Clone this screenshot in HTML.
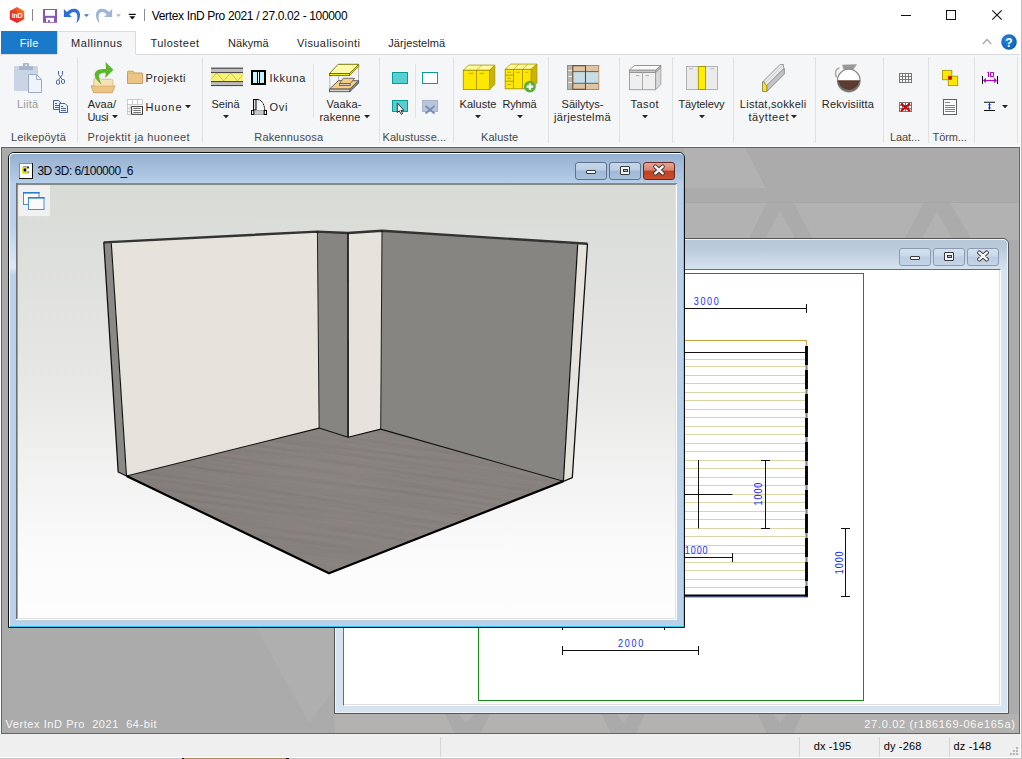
<!DOCTYPE html>
<html><head><meta charset="utf-8">
<style>
*{margin:0;padding:0;box-sizing:border-box}
html,body{width:1022px;height:759px;overflow:hidden;background:#fff;font-family:"Liberation Sans", sans-serif;color:#000;position:relative}
.a{position:absolute}
.t{position:absolute;white-space:pre}
svg{position:absolute;overflow:visible}
</style></head><body>
<div class="a" style="left:0;top:0;width:1022px;height:31px;background:#fff"></div><div class="a" style="left:1021px;top:0;width:1px;height:759px;background:#bdbdbd"></div><svg style="left:8px;top:6px" width="18" height="18" viewBox="0 0 18 18">
<defs><linearGradient id="gInd" x1="0.1" y1="0.9" x2="0.9" y2="0.1"><stop offset="0" stop-color="#e81c22"/><stop offset="0.5" stop-color="#ec3a24"/><stop offset="1" stop-color="#f2852e"/></linearGradient></defs>
<polygon points="9,1 16.2,5 16.2,13.2 9,17 1.8,13.2 1.8,5" fill="url(#gInd)"/>
<text x="9" y="12" font-size="7" font-weight="bold" fill="#fff" text-anchor="middle" font-family="Liberation Sans" letter-spacing="-0.3">InD</text>
</svg><div class="a" style="left:32px;top:9px;width:1px;height:12px;background:#8a8a8a"></div><svg style="left:43px;top:9px" width="14" height="14" viewBox="0 0 14 14">
<rect x="0" y="0" width="14" height="13.8" fill="#8a55b5"/>
<rect x="2" y="1" width="10" height="5.8" fill="#fff"/>
<rect x="3" y="8.8" width="8" height="4.2" fill="#fff"/>
<rect x="5" y="11.2" width="2" height="1.8" fill="#8a55b5"/>
</svg><svg style="left:0;top:0" width="150" height="30" viewBox="0 0 150 30">
<g fill="#2f6fd6">
<polygon points="63.9,9 63.9,17 71.8,17"/>
<path d="M66.5,12.5 C70,7.5 79.5,7 80,14.5 C80.2,18.5 78.5,21.5 76.3,23.3 C77.3,20.5 77.6,17.5 77.2,15 C76.5,11.3 72,10.5 69.3,14.8 Z"/>
</g>
<g fill="#9fb5d5" transform="translate(176,0) scale(-1,1)">
<polygon points="63.9,9 63.9,17 71.8,17"/>
<path d="M66.5,12.5 C70,7.5 79.5,7 80,14.5 C80.2,18.5 78.5,21.5 76.3,23.3 C77.3,20.5 77.6,17.5 77.2,15 C76.5,11.3 72,10.5 69.3,14.8 Z"/>
</g>
<polygon points="84,14.2 89,14.2 86.5,17" fill="#4a70b0"/>
<polygon points="116,14.2 121,14.2 118.5,17" fill="#b8b8b8"/>
</svg><svg style="left:0;top:0" width="150" height="30" viewBox="0 0 150 30">
<rect x="128.8" y="13.8" width="7" height="1.2" fill="#111"/><polygon points="129.3,16.3 135.3,16.3 132.3,19.6" fill="#111"/></svg><div class="a" style="left:144px;top:9px;width:1px;height:12px;background:#8a8a8a"></div><div class="a" style="left:901px;top:15px;width:10px;height:1px;background:#111"></div><div class="a" style="left:946px;top:10px;width:10px;height:10px;border:1px solid #111"></div><svg style="left:992px;top:10px" width="10" height="10" viewBox="0 0 10 10"><path d="M0.3,0.3 L9.7,9.7 M9.7,0.3 L0.3,9.7" stroke="#111" stroke-width="1.1"/></svg><div class="a" style="left:1px;top:31px;width:56px;height:23px;background:#1a79c9"></div><div class="a" style="left:57px;top:31px;width:79px;height:24px;background:#f5f6f7;border:1px solid #dadbdc;border-bottom:none"></div><svg style="left:982px;top:38px" width="10" height="7" viewBox="0 0 10 7"><path d="M0.8,6 L5,1.5 L9.2,6" fill="none" stroke="#a8a8a8" stroke-width="1.3"/></svg><svg style="left:1001px;top:34px" width="16" height="16" viewBox="0 0 16 16">
<defs><radialGradient id="gHelp" cx="0.4" cy="0.35" r="0.7"><stop offset="0" stop-color="#2a86dc"/><stop offset="1" stop-color="#0b5cb3"/></radialGradient></defs>
<circle cx="8" cy="8" r="7.8" fill="url(#gHelp)"/>
<text x="8" y="12.6" font-size="12" font-weight="bold" fill="#fff" text-anchor="middle" font-family="Liberation Sans">?</text></svg><div class="a" style="left:0;top:54px;width:1020px;height:1px;background:#dadbdc"></div><div class="a" style="left:57px;top:54px;width:79px;height:1px;background:#f5f6f7"></div><div class="a" style="left:0;top:55px;width:1020px;height:90px;background:#f5f6f7"></div><div class="a" style="left:0;top:145px;width:1020px;height:2px;background:#f9fafb"></div><div class="a" style="left:77px;top:57px;width:1px;height:86px;background:#e0e1e3"></div><div class="a" style="left:202px;top:57px;width:1px;height:86px;background:#e0e1e3"></div><div class="a" style="left:379px;top:57px;width:1px;height:86px;background:#e0e1e3"></div><div class="a" style="left:453px;top:57px;width:1px;height:86px;background:#e0e1e3"></div><div class="a" style="left:548px;top:57px;width:1px;height:86px;background:#e0e1e3"></div><div class="a" style="left:619px;top:57px;width:1px;height:86px;background:#e0e1e3"></div><div class="a" style="left:672px;top:57px;width:1px;height:86px;background:#e0e1e3"></div><div class="a" style="left:733px;top:57px;width:1px;height:86px;background:#e0e1e3"></div><div class="a" style="left:815px;top:57px;width:1px;height:86px;background:#e0e1e3"></div><div class="a" style="left:883px;top:57px;width:1px;height:86px;background:#e0e1e3"></div><div class="a" style="left:928px;top:57px;width:1px;height:86px;background:#e0e1e3"></div><div class="a" style="left:974px;top:57px;width:1px;height:86px;background:#e0e1e3"></div><div class="a" style="left:1017px;top:57px;width:1px;height:86px;background:#e0e1e3"></div><div class="a" style="left:313px;top:64px;width:1px;height:54px;background:#e1e2e4"></div><div class="a" style="left:415px;top:64px;width:1px;height:54px;background:#e1e2e4"></div><svg style="left:112px;top:114.5px" width="6" height="4" viewBox="0 0 6 4"><polygon points="0,0 6,0 3,3.2" fill="#222"/></svg><svg style="left:185px;top:104.5px" width="6" height="4" viewBox="0 0 6 4"><polygon points="0,0 6,0 3,3.2" fill="#222"/></svg><svg style="left:223px;top:114.5px" width="6" height="4" viewBox="0 0 6 4"><polygon points="0,0 6,0 3,3.2" fill="#222"/></svg><svg style="left:364px;top:114.5px" width="6" height="4" viewBox="0 0 6 4"><polygon points="0,0 6,0 3,3.2" fill="#222"/></svg><svg style="left:475px;top:114.5px" width="6" height="4" viewBox="0 0 6 4"><polygon points="0,0 6,0 3,3.2" fill="#222"/></svg><svg style="left:517px;top:114.5px" width="6" height="4" viewBox="0 0 6 4"><polygon points="0,0 6,0 3,3.2" fill="#222"/></svg><svg style="left:642px;top:114.5px" width="6" height="4" viewBox="0 0 6 4"><polygon points="0,0 6,0 3,3.2" fill="#222"/></svg><svg style="left:698.5px;top:114.5px" width="6" height="4" viewBox="0 0 6 4"><polygon points="0,0 6,0 3,3.2" fill="#222"/></svg><svg style="left:791px;top:114.5px" width="6" height="4" viewBox="0 0 6 4"><polygon points="0,0 6,0 3,3.2" fill="#222"/></svg><svg style="left:1002px;top:104.5px" width="6" height="4" viewBox="0 0 6 4"><polygon points="0,0 6,0 3,3.2" fill="#222"/></svg><svg style="left:0;top:0" width="1022" height="150" viewBox="0 0 1022 150">
<!-- clipboard (disabled) -->
<rect x="14" y="66" width="24" height="25" rx="1.5" fill="#c9d5e5"/>
<rect x="19" y="66.3" width="14" height="3.7" fill="#a6b4cc"/>
<rect x="23" y="63" width="6" height="4" rx="1" fill="#a6b4cc"/>
<rect x="25.3" y="64.3" width="1.6" height="1.6" fill="#f5f6f7"/>
<path d="M28,74 H36.5 L42,79.5 V93 H28 Z" fill="#eef3fc"/>
<path d="M28.5,74.5 H36.5 L41.5,79.5 V92.5 H28.5 Z" fill="none" stroke="#9aacc8" stroke-width="1"/>
<path d="M36.5,74.5 V79.5 H41.5" fill="none" stroke="#9aacc8" stroke-width="1"/>
<!-- scissors -->
<g fill="none" stroke="#4a6494" stroke-width="1">
<path d="M58.5,71 V74.5 L62.3,79.5 M62.5,71 V74.5 L58.7,79.8"/>
<rect x="56.5" y="80" width="3" height="4.3" rx="1.3"/>
<rect x="61.5" y="79.5" width="3" height="4" rx="1.3"/>
</g>
<!-- copy -->
<g fill="#eef3fb" stroke="#4a6494" stroke-width="1">
<path d="M53.5,100.5 H58.5 L61.5,103.5 V109.5 H53.5 Z"/>
<path d="M59.5,103.5 H65 L67.5,106 V112.5 H59.5 Z"/>
</g>
<path d="M55,103.5 H57 M55,105.5 H59 M55,107.5 H59 M61,106.5 H63 M61,108.5 H66 M61,110.5 H66" stroke="#4a6494" stroke-width="1"/>
<!-- Avaa/Uusi -->
<path d="M91.2,85.8 H114.8 L114.2,88 L112.3,92.7 H93.6 L91.8,88 Z" fill="#ecc583" stroke="#c9995a" stroke-width="0.8"/>
<path d="M93.8,85.6 V79.5 Q93.8,78.2 95,78.2 H100 L101.2,79.3 H111.5 Q112.8,79.3 112.8,80.5 V85.6" fill="#f7e2b8" stroke="#d8b57a" stroke-width="0.8"/>
<path d="M101.7,84.8 C97,80.5 93.5,77 95,73 C96.5,69.5 101,68.8 106,69 L105.5,62 L113.4,69.8 L105.2,78 L105.6,72.8 C101.5,72.8 98.5,74 99,77 C99.3,79.5 100.8,82.5 101.7,84.8 Z" fill="#5cb82a"/>
<!-- Projekti folder -->
<path d="M127.5,83.5 V72.2 Q127.5,71.2 128.5,71.2 H133 L134.5,73 H141.8 Q142.6,73 142.6,74 V83.5 Z" fill="#ecc583" stroke="#c39656" stroke-width="0.9"/>
<path d="M127.5,73.6 H142.6" stroke="#d6ad6c" stroke-width="0.6"/>
<!-- Huone -->
<g fill="#fff" stroke="#c2c2c2" stroke-width="0.8">
<rect x="127.5" y="99.5" width="5" height="5"/><rect x="132.5" y="99.5" width="5" height="5"/><rect x="137.5" y="99.5" width="5" height="5"/>
<rect x="127.5" y="104.5" width="2.5" height="3.8"/><rect x="127.5" y="108.3" width="2.5" height="3.1"/><rect x="127.5" y="111.4" width="2.5" height="3.1"/>
</g>
<rect x="131.6" y="106.6" width="10.9" height="7.7" fill="#fff" stroke="#3a3a3a" stroke-width="1"/>
<path d="M133.3,108.5 H140.8 M133.3,110.5 H140.8 M133.3,112.5 H140.8" stroke="#555" stroke-width="0.8"/>
<!-- Seina -->
<rect x="211" y="68" width="32" height="18" fill="#bdbdbd"/>
<rect x="211" y="72.6" width="32" height="8.8" fill="#f8f27a"/>
<g fill="#4a4a4a"><rect x="211" y="67.6" width="32" height="1.2"/><rect x="211" y="72" width="32" height="1.1"/><rect x="211" y="81" width="32" height="1.1"/><rect x="211" y="85" width="32" height="1.1"/></g>
<path d="M211,79.5 L216.7,73 L223.6,80.8 L230.7,73 L237.4,80.8 L243,74.6" fill="none" stroke="#cbc400" stroke-width="0.8"/>
<!-- Ikkuna -->
<rect x="251" y="70" width="15" height="15" fill="#000"/>
<rect x="253" y="72" width="4" height="11" fill="#c4f4fc"/>
<rect x="260" y="72" width="4" height="11" fill="#c4f4fc"/>
<rect x="258" y="72" width="1" height="11" fill="#fff"/>
<!-- Ovi -->
<rect x="253.5" y="99.5" width="2.5" height="10.5" fill="#ddd" stroke="#000" stroke-width="1"/>
<path d="M254,99.5 H258" stroke="#000" stroke-width="1"/>
<path d="M258,99.6 C261.5,100 264.2,103.5 264.8,110" fill="none" stroke="#000" stroke-width="1" stroke-dasharray="1.3 0.5"/>
<rect x="253.8" y="110.5" width="10.4" height="4" fill="#c8c8c8" stroke="#999" stroke-width="0.8"/>
<rect x="251.5" y="110.5" width="2.3" height="4" fill="#fff" stroke="#000" stroke-width="1"/>
<rect x="264.2" y="110.5" width="2.3" height="4" fill="#fff" stroke="#000" stroke-width="1"/>
<!-- Vaakarakenne -->
<g stroke="#a8a8a8" stroke-width="0.8"><path d="M329.8,75.5 V89 M338.6,75.5 V81 M358.5,66 V81"/></g>
<path d="M329.5,89.1 L338.4,80.7 H358.7 L349.8,89.1 Z" fill="#f8cd80" stroke="#555" stroke-width="0.9"/>
<path d="M349.8,89.1 L358.7,80.7 V83.3 L349.8,91.7 Z" fill="#888" stroke="#555" stroke-width="0.8"/>
<rect x="329.5" y="89.1" width="20.3" height="2.6" fill="#cfcfcf" stroke="#555" stroke-width="0.9"/>
<path d="M339.6,83.6 L343.3,78.3 H354.6 L350.2,83.6 Z" fill="#f8cd80" stroke="#555" stroke-width="0.8"/>
<rect x="339.6" y="83.6" width="10.6" height="2" fill="#cfcfcf" stroke="#555" stroke-width="0.8"/>
<path d="M329.5,73.5 L338.2,64.3 H358.7 L349.5,73.5 Z" fill="#fefca8" stroke="#6b6b00" stroke-width="0.9"/>
<path d="M349.5,73.5 L358.7,64.3 V66.4 L349.5,75.6 Z" fill="#e8e000" stroke="#6b6b00" stroke-width="0.8"/>
<rect x="329.5" y="73.5" width="20" height="2.1" fill="#f5f000" stroke="#6b6b00" stroke-width="0.9"/>
<!-- Kalustus -->
<rect x="392.5" y="72.5" width="15" height="11" fill="#55cfcf" stroke="#0a9a9a" stroke-width="1"/>
<rect x="422.5" y="72.5" width="15" height="11" fill="#fff" stroke="#0a9a9a" stroke-width="1"/>
<rect x="392.5" y="100.5" width="15" height="11" fill="#55cfcf" stroke="#0a9a9a" stroke-width="1"/>
<path d="M397.3,103 V112.6 L399.3,110.8 L401.2,114.3 L402.6,113.6 L400.9,110.3 L403.8,110.3 Z" fill="#fff" stroke="#111" stroke-width="0.8"/>
<rect x="422.5" y="100.5" width="15" height="11" fill="#b8c6dc" stroke="#a6b5cc" stroke-width="1"/>
<path d="M425.5,106 L434.5,113.5 M434.5,106 L425.5,113.5" stroke="#7a8fb4" stroke-width="2"/>
<!-- Kaluste -->
<path d="M463.3,70.3 L468.5,65.1 H494.8 L489.6,70.3 Z" fill="#fffaa0" stroke="#a89400" stroke-width="0.8"/>
<path d="M476.5,70.3 L481.7,65.1" stroke="#a89400" stroke-width="0.6"/>
<path d="M489.6,70.3 L494.8,65.1 V84.2 L489.6,89.6 Z" fill="#cbb500" stroke="#a89400" stroke-width="0.8"/>
<rect x="463.3" y="70.3" width="26.3" height="19.3" fill="#ffe800" stroke="#a89400" stroke-width="0.9"/>
<path d="M476.5,70.3 V89.6" stroke="#a89400" stroke-width="0.9"/>
<path d="M469,73.4 H473.5 M479.5,73.4 H484" stroke="#a89400" stroke-width="0.8"/>
<!-- Ryhma -->
<path d="M505.2,69.4 L510.5,64.1 H536.9 L531.1,69.4 Z" fill="#fffaa0" stroke="#a89400" stroke-width="0.8"/>
<path d="M513.5,69.4 L518.8,64.1 M522.5,69.4 L527.8,64.1" stroke="#a89400" stroke-width="0.6"/>
<path d="M531.1,69.4 L536.9,64.1 V83 L531.1,88.8 Z" fill="#cbb500" stroke="#a89400" stroke-width="0.8"/>
<rect x="505.2" y="69.4" width="25.9" height="19.4" fill="#ffe800" stroke="#a89400" stroke-width="0.9"/>
<path d="M513.5,69.4 V88.8 M522.5,69.4 V88.8 M505.2,75.2 H513.5 M505.2,81.2 H513.5" stroke="#a89400" stroke-width="0.9"/>
<path d="M507.5,72.3 H511 M507.5,78.3 H511 M507.5,84.5 H511 M516.5,72.3 H519.5 M525.5,72.3 H528.5" stroke="#a89400" stroke-width="0.7"/>
<circle cx="529.9" cy="86.7" r="5.9" fill="#5cae37"/>
<path d="M529.9,83.4 V90 M526.6,86.7 H533.2" stroke="#fff" stroke-width="2.2"/>
<!-- Sailytys -->
<rect x="567.5" y="65.5" width="31.2" height="24" fill="#dfc4a4" stroke="#c08848" stroke-width="1"/>
<rect x="568" y="66" width="4.3" height="23" fill="#b5b5b5"/>
<path d="M568.5,70.5 H572 M568.5,76.5 H572 M568.5,82.5 H572" stroke="#fff" stroke-width="0.9"/>
<rect x="572.8" y="71.3" width="25.6" height="12.2" fill="#c8dde5"/>
<path d="M572.8,71.6 H598.4 M572.8,83.3 H598.4" stroke="#2b6080" stroke-width="0.9"/>
<rect x="572.8" y="65.7" width="12.7" height="23.6" fill="none" stroke="#6b4a28" stroke-width="1.1"/>
<!-- Tasot -->
<path d="M629.3,70.2 L634.3,65.5 H660.9 L655.6,70.2 Z" fill="#fafafa" stroke="#888" stroke-width="0.9"/>
<path d="M655.6,72.5 L660.9,67.5 V84.5 L655.6,89.7 Z" fill="#d8d8d8" stroke="#9a9a9a" stroke-width="0.8"/>
<path d="M655.6,70.2 L660.9,65.5 V67.5 L655.6,72.5 Z" fill="#bbb" stroke="#888" stroke-width="0.7"/>
<rect x="629.5" y="72.5" width="26" height="17.2" fill="#efefef" stroke="#9a9a9a" stroke-width="0.9"/>
<rect x="629.3" y="70.2" width="26.3" height="2.3" fill="#c8c8c8" stroke="#888" stroke-width="0.7"/>
<path d="M642.5,72.5 V89.7 M636,75.6 H639.5 M645.5,75.6 H649" stroke="#9a9a9a" stroke-width="0.8"/>
<!-- Taytelevy -->
<rect x="686.5" y="66.5" width="31" height="23" fill="#ebebeb" stroke="#aaa" stroke-width="0.9"/>
<rect x="698.3" y="66.5" width="7.3" height="23" fill="#ffee00" stroke="#a09000" stroke-width="0.9"/>
<path d="M689,68.8 H693 M710.5,68.8 H714.5" stroke="#aaa" stroke-width="0.8"/>
<!-- Listat -->
<path d="M762.5,82 L780,64.5 L783.5,64.5 L783.5,67.5 L784.2,68.5 V74 L766.8,91.4 H762.5 Z" fill="#e8e8e8" stroke="#888" stroke-width="0.8"/>
<path d="M766.8,91.4 V85.5 L784.2,68.2" fill="none" stroke="#888" stroke-width="0.7"/>
<path d="M766.8,91.4 L784.2,74 V68.5 L766.8,85.5 Z" fill="#c4c4c4" stroke="#888" stroke-width="0.7"/>
<path d="M763.5,81.2 L781,64 M765.5,82.5 L783,65" stroke="#bbb" stroke-width="0.5"/>
<path d="M762.5,81.8 L764.5,82 L765.3,84.7 L766.8,85.5 V91.4 H762.5 Z" fill="#ffe600" stroke="#777" stroke-width="0.7"/>
<!-- Rekvisiitta -->
<path d="M839.5,68 C835.5,68.5 834.5,74 836.5,77.5" fill="none" stroke="#aaa" stroke-width="1.5"/>
<path d="M842,64.8 L857,64.2 L853.5,69.2 H843.5 Z" fill="#999"/>
<circle cx="848.8" cy="80.5" r="11.3" fill="#fff" stroke="#8a8a8a" stroke-width="1.2"/>
<path d="M837.6,80.2 H860 A11.2,11.2 0 0 1 837.6,80.2 Z" fill="#5a3d2e"/>
<path d="M837.8,81.5 A11.2,11.2 0 0 0 859.8,81.5" fill="none" stroke="#777" stroke-width="1.2"/>
<!-- Laat grid -->
<rect x="899" y="73" width="13" height="10" fill="#777"/>
<g fill="#fff"><rect x="900" y="74" width="2" height="2"/><rect x="900" y="77" width="2" height="2"/><rect x="900" y="80" width="2" height="2"/><rect x="903" y="74" width="2" height="2"/><rect x="903" y="77" width="2" height="2"/><rect x="903" y="80" width="2" height="2"/><rect x="906" y="74" width="2" height="2"/><rect x="906" y="77" width="2" height="2"/><rect x="906" y="80" width="2" height="2"/><rect x="909" y="74" width="2" height="2"/><rect x="909" y="77" width="2" height="2"/><rect x="909" y="80" width="2" height="2"/></g>
<rect x="899" y="102" width="13" height="10" fill="#777"/>
<g fill="#fff"><rect x="900" y="103" width="2" height="2"/><rect x="900" y="106" width="2" height="2"/><rect x="900" y="109" width="2" height="2"/><rect x="903" y="103" width="2" height="2"/><rect x="903" y="106" width="2" height="2"/><rect x="903" y="109" width="2" height="2"/><rect x="906" y="103" width="2" height="2"/><rect x="906" y="106" width="2" height="2"/><rect x="906" y="109" width="2" height="2"/><rect x="909" y="103" width="2" height="2"/><rect x="909" y="106" width="2" height="2"/><rect x="909" y="109" width="2" height="2"/></g>
<path d="M901,103.5 L910,111 M910,103.5 L901,111" stroke="#d00000" stroke-width="2.2"/>
<!-- overlap -->
<rect x="942.5" y="70.4" width="9.3" height="9.3" fill="#ffe800" stroke="#a89a00" stroke-width="0.9"/>
<rect x="948.3" y="76.2" width="9.4" height="9.4" fill="#ffe800" stroke="#a89a00" stroke-width="0.9"/>
<rect x="948.3" y="76.2" width="3.5" height="3.5" fill="#cc0000"/>
<!-- doc -->
<rect x="943.5" y="99.5" width="13" height="15" fill="#fff" stroke="#606060" stroke-width="1"/>
<path d="M945,102.5 H950 M945,105.5 H955 M945,107.5 H955 M945,109.5 H955 M945,111.5 H955" stroke="#808080" stroke-width="1"/>
<!-- dim 10 -->
<path d="M982.5,76 V84 M997.5,76 V84" stroke="#000" stroke-width="1"/>
<path d="M984,80.5 H996" stroke="#b000c0" stroke-width="1.1"/>
<path d="M983,80.5 L985.8,77.8 V83.2 Z M997,80.5 L994.2,77.8 V83.2 Z" fill="#b000c0"/>
<path d="M987.5,72.5 L988.5,72 V77 M990.5,72.5 H993.5 V76.5 H990.5 Z" fill="none" stroke="#b000c0" stroke-width="1"/>
<!-- I beam -->
<path d="M984,102.3 H995 M984,110.5 H995" stroke="#111" stroke-width="1.1"/>
<path d="M989.5,103.3 V109.5" stroke="#0030e0" stroke-width="1"/>
<path d="M989.5,103 L987.9,105.3 H991.1 Z M989.5,109.8 L987.9,107.5 H991.1 Z" fill="#0030e0"/>
</svg><div class="a" style="left:1px;top:147px;width:1019px;height:587px;background:#ababab;border:1px solid #646464"></div><svg style="left:2px;top:148px" width="1017" height="585" viewBox="2 148 1017 585">
<g fill="#b2b2b2">
<polygon points="684,148 745,148 766,188 684,188"/>
<polygon points="684,202.5 767,202.5 748,240 684,240"/>
<polygon points="780,211.3 764.7,240 796.5,240"/>
<polygon points="793.6,202.5 924,202.5 904,240 813.2,240"/>
<polygon points="937,211.5 921,240 953,240"/>
<polygon points="950,202.5 1019,202.5 1019,240 972,240"/>
<polygon points="256,628 334,628 334,690 309,722.6" fill="#afafaf"/>
</g>
<path d="M684,202.5 H1019" stroke="#a6a6a6" stroke-width="1"/>
<rect x="335" y="714" width="684" height="19" fill="#b3b2b0"/>
<g fill="#aaaaaa">
<polygon points="445,714 490,714 480.6,733 454,733"/>
<polygon points="601.8,714 644.9,714 636.3,733 610.5,733"/>
<polygon points="757.9,714 802,714 793.4,733 766.5,733"/>
</g>
<g fill="#b3b2b0">
<polygon points="458,714 474,714 466,722.2"/>
<polygon points="617,714 629.8,714 623.4,723"/>
<polygon points="773,714 787,714 780,723"/>
</g>
</svg><div class="a" style="left:334px;top:238px;width:675px;height:476px;background:linear-gradient(#b6c7d9,#bccbdc 10px,#d2e0ee 28px,#d6e3f1 31px,#d6e3f1);border:1px solid #555;border-radius:6px 6px 0 0"></div><div class="a" style="left:335px;top:239px;width:673px;height:474px;border:1px solid #eef3f9;border-radius:5px 5px 0 0"></div><div class="a" style="left:343px;top:269px;width:658px;height:437px;background:#fff;border-top:1px solid #6e6e6e;border-left:1px solid #6e6e6e;border-right:1px solid #fff;border-bottom:1px solid #fff"></div><div class="a" style="left:344px;top:270px;width:656px;height:435px;border-right:1px solid #e0e0e0;border-bottom:1px solid #e0e0e0"></div><div class="a" style="left:899px;top:248px;width:32px;height:18px;background:linear-gradient(#d5e1ef,#c9d8ea 45%,#bccde2 50%,#c6d5e8);border:1px solid #8a9bb3;border-radius:3px"></div><div class="a" style="left:910.0px;top:255.8px;width:10px;height:4px;background:#f4f4f4;border:1px solid #3a3a3a;border-radius:1px"></div><div class="a" style="left:933px;top:248px;width:32px;height:18px;background:linear-gradient(#d5e1ef,#c9d8ea 45%,#bccde2 50%,#c6d5e8);border:1px solid #8a9bb3;border-radius:3px"></div><div class="a" style="left:944.0px;top:252.3px;width:10px;height:9px;background:#f4f4f4;border:1px solid #3a3a3a;border-radius:1px"></div><div class="a" style="left:946.5px;top:254.8px;width:5px;height:3px;background:#a9bdd5;border:1px solid #3a3a3a"></div><div class="a" style="left:967px;top:248px;width:32px;height:18px;background:linear-gradient(#d5e1ef,#c9d8ea 45%,#bccde2 50%,#c6d5e8);border:1px solid #8a9bb3;border-radius:3px"></div><svg style="left:977.0px;top:251.3px" width="12" height="10" viewBox="0 0 12 10"><path d="M2.3,1.6 L9.7,8.4 M9.7,1.6 L2.3,8.4" stroke="#3a3a3a" stroke-width="4.2" stroke-linecap="round"/><path d="M2.3,1.6 L9.7,8.4 M9.7,1.6 L2.3,8.4" stroke="#f6f6f6" stroke-width="2.4" stroke-linecap="round"/></svg><svg style="left:344px;top:270px" width="656" height="434" viewBox="344 270 656 434">
<rect x="478.5" y="273.5" width="385" height="427" fill="none" stroke="#1a8c1a" stroke-width="1"/>
<g stroke="#d9d5a6" stroke-width="1"><path d="M344,359.5 H805"/><path d="M344,366.5 H805"/><path d="M344,375.5 H805"/><path d="M344,383.5 H805"/><path d="M344,392.5 H805"/><path d="M344,400.5 H805"/><path d="M344,409.5 H805"/><path d="M344,417.5 H805"/><path d="M344,426.5 H805"/><path d="M344,434.5 H805"/><path d="M344,443.5 H805"/><path d="M344,451.5 H805"/><path d="M344,460.5 H805"/><path d="M344,468.5 H805"/><path d="M344,477.5 H805"/><path d="M344,485.5 H805"/><path d="M344,494.5 H805"/><path d="M344,502.5 H805"/><path d="M344,511.5 H805"/><path d="M344,519.5 H805"/><path d="M344,528.5 H805"/><path d="M344,536.5 H805"/><path d="M344,545.5 H805"/><path d="M344,553.5 H805"/><path d="M344,562.5 H805"/><path d="M344,570.5 H805"/><path d="M344,579.5 H805"/><path d="M344,587.5 H805"/></g>
<path d="M344,340.5 H806.5 V346" fill="none" stroke="#c9a23e" stroke-width="1"/>
<path d="M344,352.5 H806" stroke="#111" stroke-width="1"/>
<path d="M806.5,346 V597" stroke="#8a8a8a" stroke-width="2.2"/>
<path d="M806.5,346 V597" stroke="#000" stroke-width="2.8" stroke-dasharray="19 5"/>
<path d="M344,596.8 H808" stroke="#5a6ef0" stroke-width="1.2"/>
<path d="M344,595.5 H807.8" stroke="#000" stroke-width="2"/>
<g stroke="#111" stroke-width="1" fill="none">
<path d="M344,308.5 H806.5 M806.5,304 V313"/>
<path d="M698.5,460 V528.5 M344,494.5 H732.5"/>
<path d="M765.5,460.5 V528.5 M761,460.5 H770 M761,528.5 H770"/>
<path d="M344,557.5 H732.5 M732.5,553 V562"/>
<path d="M845.5,528.5 V596.5 M841,528.5 H850 M841,596.5 H850"/>
<path d="M562.5,650.5 H698.5 M562.5,646 V655 M698.5,646 V655"/>
<path d="M562.5,627 V630 M664.5,627 V630"/>
</g>
<g fill="#1a2cff" font-family="Liberation Sans" font-size="10.6"><text transform="translate(693.8,305) scale(0.85,1)" x="0" y="0" textLength="29.41" lengthAdjust="spacing">3000</text><text transform="translate(684.8,554) scale(0.85,1)" x="0" y="0" textLength="26.82" lengthAdjust="spacing">1000</text><text transform="translate(618.0,647) scale(0.85,1)" x="0" y="0" textLength="29.76" lengthAdjust="spacing">2000</text><text transform="translate(761.8,505.4) rotate(-90) scale(0.85,1)" x="0" y="0" textLength="26.82" lengthAdjust="spacing">1000</text><text transform="translate(842.8,574.2) rotate(-90) scale(0.85,1)" x="0" y="0" textLength="26.82" lengthAdjust="spacing">1000</text></g>
</svg><div class="a" style="left:8px;top:152px;width:677px;height:476px;background:linear-gradient(#94afce,#9db7d5 8px,#b0c9e4 26px,#b9d1ea 31px,#b9d1ea);border:1px solid #111;border-radius:6px 6px 0 0"></div><div class="a" style="left:9px;top:153px;width:675px;height:474px;border:1px solid #fff;border-bottom-color:#28c8f0;border-right-color:#60d0f0;border-radius:5px 5px 0 0"></div><div class="a" style="left:10px;top:225px;width:6px;height:50px;background:linear-gradient(rgba(225,236,248,0),rgba(225,236,248,0.9) 85%,rgba(225,236,248,0))"></div><div class="a" style="left:575px;top:162px;width:32px;height:18px;background:linear-gradient(#c7d7ea,#b9cde4 45%,#9fb8d6 50%,#a9c2df);border:1px solid #5f7391;border-radius:3px"></div><div class="a" style="left:586.0px;top:169.8px;width:10px;height:4px;background:#f4f4f4;border:1px solid #3a3a3a;border-radius:1px"></div><div class="a" style="left:609px;top:162px;width:32px;height:18px;background:linear-gradient(#c7d7ea,#b9cde4 45%,#9fb8d6 50%,#a9c2df);border:1px solid #5f7391;border-radius:3px"></div><div class="a" style="left:620.0px;top:166.3px;width:10px;height:9px;background:#f4f4f4;border:1px solid #3a3a3a;border-radius:1px"></div><div class="a" style="left:622.5px;top:168.8px;width:5px;height:3px;background:#a9bdd5;border:1px solid #3a3a3a"></div><div class="a" style="left:643px;top:162px;width:32px;height:18px;background:linear-gradient(#e8a493,#d9836e 45%,#bf3d1f 50%,#c9502e);border:1px solid #6a2a1f;border-radius:3px"></div><svg style="left:653.0px;top:165.3px" width="12" height="10" viewBox="0 0 12 10"><path d="M2.3,1.6 L9.7,8.4 M9.7,1.6 L2.3,8.4" stroke="#3a3a3a" stroke-width="4.2" stroke-linecap="round"/><path d="M2.3,1.6 L9.7,8.4 M9.7,1.6 L2.3,8.4" stroke="#f6f6f6" stroke-width="2.4" stroke-linecap="round"/></svg><svg style="left:19px;top:163px" width="14" height="16" viewBox="0 0 14 16">
<rect x="0" y="0" width="14" height="16" fill="#111"/>
<rect x="0" y="0" width="13" height="15" fill="#8a8a8a"/>
<rect x="1" y="1" width="12" height="14" fill="#fff"/>
<path d="M3.5,4 L4.5,3 H10 V5.5 H6 V8 H10 V10.5 H3.5 Z" fill="#9a9a9a"/>
<path d="M3,4.2 H9.2 V5.2 H5.2 V8.6 H9.2 V9.8 H3 Z" fill="#d6d600"/>
<path d="M3.6,4.7 H8 M3.6,9.3 H8 M3.6,4.7 V9.3" stroke="#ffff20" stroke-width="0.9" stroke-dasharray="0.9 0.9"/>
<circle cx="6" cy="7" r="1.4" fill="#000"/>
<circle cx="9" cy="4.6" r="0.8" fill="#000"/>
</svg><svg style="left:16px;top:183px" width="662" height="437" viewBox="16 183 662 437">
<defs>
<linearGradient id="gBg" x1="0" y1="183" x2="0" y2="620" gradientUnits="userSpaceOnUse">
<stop offset="0" stop-color="#d8dad6"/><stop offset="0.45" stop-color="#e7e8e6"/><stop offset="0.85" stop-color="#fbfbfb"/><stop offset="1" stop-color="#fdfdfd"/></linearGradient>
<linearGradient id="gFloor" x1="126" y1="430" x2="563" y2="573" gradientUnits="userSpaceOnUse">
<stop offset="0" stop-color="#7e7773"/><stop offset="0.5" stop-color="#837c78"/><stop offset="1" stop-color="#827b77"/></linearGradient>
<clipPath id="cFloor"><polygon points="126.5,476 319.1,428.1 348.1,437.2 380.7,429.1 563.4,481.3 329,573.3"/></clipPath>
<filter id="fWood" x="0" y="0" width="100%" height="100%">
<feTurbulence type="fractalNoise" baseFrequency="0.008 0.3" numOctaves="2" seed="11"/>
<feColorMatrix type="matrix" values="1 0 0 0 0  1 0 0 0 0  1 0 0 0 0  0 0 0 0 0.09"/>
</filter>
</defs>
<rect x="16" y="183" width="661" height="437" fill="url(#gBg)"/>
<path d="M16,184 H677 M16.8,183 V620" stroke="#6e6e6e" stroke-width="1.6"/>
<path d="M676.5,184 V619.5 H16" fill="none" stroke="#fff" stroke-width="1"/>
<path d="M675.5,185 V618.5 H17.5" fill="none" stroke="#e0e0e0" stroke-width="1"/>
<rect x="18.5" y="185.3" width="31.4" height="30.8" fill="#f1f1f1"/>
<rect x="23.5" y="192.5" width="15.5" height="12" fill="#fafafa" stroke="#4a90cc" stroke-width="1"/>
<rect x="23" y="192" width="16.5" height="1.6" fill="#2a7fc8"/>
<rect x="28.5" y="197.5" width="15.5" height="12" fill="#fafafa" stroke="#4a90cc" stroke-width="1"/>
<rect x="28" y="197" width="16.5" height="1.6" fill="#2a7fc8"/>
<!-- floor -->
<polygon points="126.5,476 319.1,428.1 348.1,437.2 380.7,429.1 563.4,481.3 329,573.3" fill="url(#gFloor)"/>
<g clip-path="url(#cFloor)"><rect x="40" y="300" width="620" height="400" filter="url(#fWood)" transform="rotate(8 345 500)"/></g>
<path d="M301,497 L366,477" stroke="#8e8884" stroke-width="0.8" opacity="0.6"/>
<!-- walls -->
<polygon points="103.8,242.2 111.3,243.3 126.5,476 118.2,472" fill="#8a8985"/>
<polygon points="111.3,243.3 317.4,231.3 319.1,428.1 126.5,476" fill="#e6e3dd"/>
<polygon points="317.4,231.3 348,233 348.1,437.2 319.1,428.1" fill="#868581"/>
<polygon points="348,233 382,230.5 380.7,429.1 348.1,437.2" fill="#e6e3dd"/>
<polygon points="382,230.5 577.7,244.2 563.4,481.3 380.7,429.1" fill="#868581"/>
<polygon points="577.7,244.2 587.5,243.8 572.3,477.7 563.4,481.3" fill="#e6e3dd"/>
<!-- edges -->
<g fill="none" stroke="#111" stroke-linejoin="round">
<path d="M103.8,242.4 L317.4,231.6 L348,233 L382,230.8 L587.5,243.8" stroke-width="2.4" stroke="#333"/>
<path d="M103.8,242.2 L118.2,472 L126.5,476" stroke-width="1.3"/>
<path d="M111.3,243.3 L126.5,476" stroke-width="1.1"/>
<path d="M317.4,231.3 L319.1,428.1" stroke-width="0.9"/>
<path d="M348,233 L348.1,437.2" stroke-width="1.6"/>
<path d="M382,230.5 L380.7,429.1" stroke-width="0.9"/>
<path d="M577.7,244.2 L563.4,481.3" stroke-width="1.2"/>
<path d="M587.5,243.8 L572.3,477.7 L563.4,481.3" stroke-width="1.3"/>
<path d="M126.5,476 L319.1,428.1 L348.1,437.2 L380.7,429.1 L563.4,481.3" stroke-width="1.1"/>
<path d="M126.5,476 L329,573.3 L563.4,481.3" stroke-width="2.2" stroke="#000"/>
</g>
</svg><div class="a" style="left:0;top:734px;width:1020px;height:23px;background:#efefef"></div><div class="a" style="left:1020px;top:0;width:1px;height:758px;background:#fff"></div><div class="a" style="left:0;top:757px;width:1021px;height:1px;background:#fff"></div><div class="a" style="left:0;top:758px;width:1022px;height:1px;background:#c4c4c4"></div><div class="a" style="left:182px;top:758px;width:107px;height:1px;background:#ad8a52"></div><div class="a" style="left:182px;top:758px;width:2px;height:1px;background:#111"></div><div class="a" style="left:286px;top:758px;width:3px;height:1px;background:#111"></div><div class="a" style="left:440px;top:737px;width:1px;height:20px;background:#d5d5d5"></div><div class="a" style="left:799px;top:737px;width:1px;height:20px;background:#d5d5d5"></div><div class="a" style="left:879px;top:737px;width:1px;height:20px;background:#d5d5d5"></div><div class="a" style="left:949px;top:737px;width:1px;height:20px;background:#d5d5d5"></div><svg style="left:1010px;top:747px" width="8" height="8" viewBox="0 0 8 8">
<g fill="#b4b4b4"><rect x="6" y="0" width="2" height="2"/><rect x="3" y="3" width="2" height="2"/><rect x="6" y="3" width="2" height="2"/><rect x="0" y="6" width="2" height="2"/><rect x="3" y="6" width="2" height="2"/><rect x="6" y="6" width="2" height="2"/></g></svg>
<div class="t" style="left:151.80px;top:9.03px;font-size:12px;line-height:14px;letter-spacing:-0.352px;color:#000;font-weight:normal;">Vertex InD Pro 2021 / 27.0.02 - 100000</div>
<div class="t" style="left:19.80px;top:36.86px;font-size:11px;line-height:13px;letter-spacing:0.289px;color:#fff;font-weight:normal;">File</div>
<div class="t" style="left:71.00px;top:36.86px;font-size:11px;line-height:13px;letter-spacing:0.566px;color:#262626;font-weight:normal;">Mallinnus</div>
<div class="t" style="left:150.50px;top:36.86px;font-size:11px;line-height:13px;letter-spacing:0.470px;color:#262626;font-weight:normal;">Tulosteet</div>
<div class="t" style="left:228.10px;top:36.86px;font-size:11px;line-height:13px;letter-spacing:0.051px;color:#262626;font-weight:normal;">Näkymä</div>
<div class="t" style="left:297.00px;top:36.86px;font-size:11px;line-height:13px;letter-spacing:0.417px;color:#262626;font-weight:normal;">Visualisointi</div>
<div class="t" style="left:388.30px;top:36.86px;font-size:11px;line-height:13px;letter-spacing:0.055px;color:#262626;font-weight:normal;">Järjestelmä</div>
<div class="t" style="left:11.00px;top:130.86px;font-size:11px;line-height:13px;letter-spacing:0.176px;color:#474747;font-weight:normal;">Leikepöytä</div>
<div class="t" style="left:87.50px;top:130.86px;font-size:11px;line-height:13px;letter-spacing:0.412px;color:#474747;font-weight:normal;">Projektit ja huoneet</div>
<div class="t" style="left:254.30px;top:130.86px;font-size:11px;line-height:13px;letter-spacing:0.152px;color:#474747;font-weight:normal;">Rakennusosa</div>
<div class="t" style="left:382.50px;top:130.86px;font-size:11px;line-height:13px;letter-spacing:0.051px;color:#474747;font-weight:normal;">Kalustusse...</div>
<div class="t" style="left:481.00px;top:130.86px;font-size:11px;line-height:13px;letter-spacing:0.083px;color:#474747;font-weight:normal;">Kaluste</div>
<div class="t" style="left:889.90px;top:130.86px;font-size:11px;line-height:13px;letter-spacing:-0.063px;color:#474747;font-weight:normal;">Laat...</div>
<div class="t" style="left:932.50px;top:130.86px;font-size:11px;line-height:13px;letter-spacing:-0.074px;color:#474747;font-weight:normal;">Törm...</div>
<div class="t" style="left:17.00px;top:97.86px;font-size:11px;line-height:13px;letter-spacing:0.228px;color:#9a9a9a;font-weight:normal;">Liitä</div>
<div class="t" style="left:87.80px;top:97.86px;font-size:11px;line-height:13px;letter-spacing:0.091px;color:#262626;font-weight:normal;">Avaa/</div>
<div class="t" style="left:87.50px;top:110.86px;font-size:11px;line-height:13px;letter-spacing:-0.339px;color:#262626;font-weight:normal;">Uusi</div>
<div class="t" style="left:145.50px;top:71.86px;font-size:11px;line-height:13px;letter-spacing:0.473px;color:#262626;font-weight:normal;">Projekti</div>
<div class="t" style="left:145.50px;top:100.86px;font-size:11px;line-height:13px;letter-spacing:0.895px;color:#262626;font-weight:normal;">Huone</div>
<div class="t" style="left:211.50px;top:97.86px;font-size:11px;line-height:13px;letter-spacing:-0.035px;color:#262626;font-weight:normal;">Seinä</div>
<div class="t" style="left:269.50px;top:71.86px;font-size:11px;line-height:13px;letter-spacing:0.716px;color:#262626;font-weight:normal;">Ikkuna</div>
<div class="t" style="left:269.50px;top:100.86px;font-size:11px;line-height:13px;letter-spacing:0.750px;color:#262626;font-weight:normal;">Ovi</div>
<div class="t" style="left:326.50px;top:97.86px;font-size:11px;line-height:13px;letter-spacing:0.191px;color:#262626;font-weight:normal;">Vaaka-</div>
<div class="t" style="left:319.50px;top:110.86px;font-size:11px;line-height:13px;letter-spacing:0.206px;color:#262626;font-weight:normal;">rakenne</div>
<div class="t" style="left:459.50px;top:97.86px;font-size:11px;line-height:13px;letter-spacing:0.049px;color:#262626;font-weight:normal;">Kaluste</div>
<div class="t" style="left:502.50px;top:97.86px;font-size:11px;line-height:13px;letter-spacing:-0.211px;color:#262626;font-weight:normal;">Ryhmä</div>
<div class="t" style="left:561.50px;top:97.86px;font-size:11px;line-height:13px;letter-spacing:0.055px;color:#262626;font-weight:normal;">Säilytys-</div>
<div class="t" style="left:554.00px;top:110.86px;font-size:11px;line-height:13px;letter-spacing:0.331px;color:#262626;font-weight:normal;">järjestelmä</div>
<div class="t" style="left:630.50px;top:97.86px;font-size:11px;line-height:13px;letter-spacing:0.426px;color:#262626;font-weight:normal;">Tasot</div>
<div class="t" style="left:678.50px;top:97.86px;font-size:11px;line-height:13px;letter-spacing:-0.135px;color:#262626;font-weight:normal;">Täytelevy</div>
<div class="t" style="left:739.80px;top:97.86px;font-size:11px;line-height:13px;letter-spacing:0.263px;color:#262626;font-weight:normal;">Listat,sokkeli</div>
<div class="t" style="left:748.50px;top:110.86px;font-size:11px;line-height:13px;letter-spacing:0.560px;color:#262626;font-weight:normal;">täytteet</div>
<div class="t" style="left:821.80px;top:97.86px;font-size:11px;line-height:13px;letter-spacing:0.198px;color:#262626;font-weight:normal;">Rekvisiitta</div>
<div class="t" style="left:5.50px;top:717.86px;font-size:11px;line-height:13px;letter-spacing:0.565px;color:#f6f6f6;font-weight:normal;">Vertex InD Pro  2021  64-bit</div>
<div class="t" style="left:864.30px;top:717.86px;font-size:11px;line-height:13px;letter-spacing:0.694px;color:#f6f6f6;font-weight:normal;">27.0.02 (r186169-06e165a)</div>
<div class="t" style="left:37.40px;top:164.03px;font-size:12px;line-height:14px;letter-spacing:-0.500px;color:#0a0a1a;font-weight:normal;">3D 3D: 6/100000_6</div>
<div class="t" style="left:813.80px;top:739.86px;font-size:11px;line-height:13px;letter-spacing:0.099px;color:#000;font-weight:normal;">dx -195</div>
<div class="t" style="left:883.70px;top:739.86px;font-size:11px;line-height:13px;letter-spacing:0.166px;color:#000;font-weight:normal;">dy -268</div>
<div class="t" style="left:953.50px;top:739.86px;font-size:11px;line-height:13px;letter-spacing:0.166px;color:#000;font-weight:normal;">dz -148</div>

</body></html>
